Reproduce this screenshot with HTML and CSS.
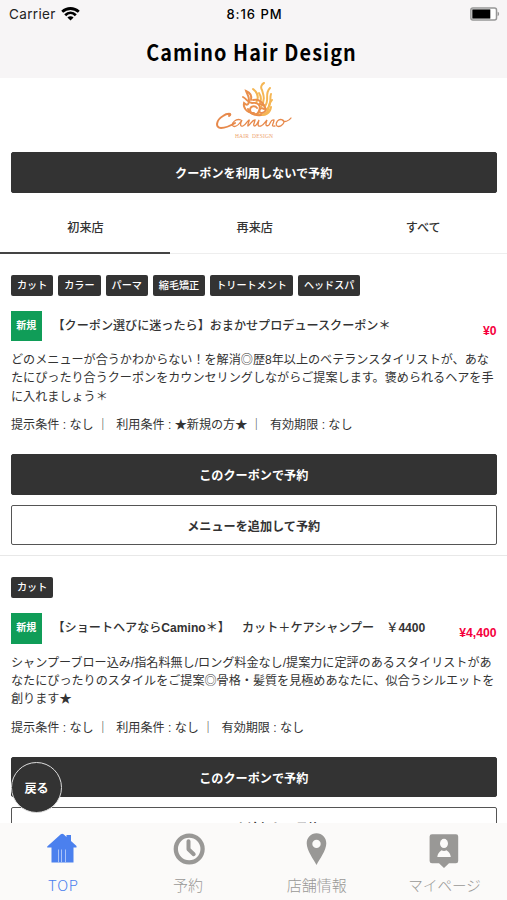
FILE: index.html
```html
<!DOCTYPE html>
<html lang="ja">
<head>
<meta charset="UTF-8">
<meta name="viewport" content="width=device-width, initial-scale=1.0">
<title>Camino Hair Design</title>
<link rel="stylesheet" href="styles.css">
</head>
<body>
<div class="app">
    <header class="header">
        <div class="status-bar">
            <div class="carrier">
                <span>Carrier</span>
                <svg width="19" height="14" viewBox="0 0 19 14" fill="none" stroke="#000" stroke-width="2.8">
                    <path d="M1.2 4.8C6 0.4 13 0.4 17.8 4.8"/>
                    <path d="M4.2 8.2C7.3 5.2 11.7 5.2 14.8 8.2"/>
                    <path d="M9.5 13.6L6.4 10.5C8.2 8.9 10.8 8.9 12.6 10.5Z" fill="#000" stroke="none"/>
                </svg>
            </div>
            <span class="time">8:16 PM</span>
            <svg class="battery" width="30" height="14" viewBox="0 0 30 14">
                <rect x="0.9" y="0.9" width="25.6" height="12.2" rx="2" fill="#fff" stroke="#969696" stroke-width="1.5"/>
                <rect x="2.3" y="2.4" width="18" height="9.2" fill="#000"/>
                <path d="M27.6 4.8C29.6 5.4 29.6 8.6 27.6 9.2Z" fill="#969696"/>
            </svg>
        </div>
        <h1 class="title">Camino Hair Design</h1>
    </header>

    <main class="content">
        <div class="logo">
            <svg width="76" height="58" viewBox="0 0 76 58" fill="none" stroke-linecap="round">
                <g stroke="#f5b654" stroke-width="2">
                    <path d="M45 25C50 17 47 12 46 8C44 5 46 2 48 1"/>
                    <path d="M40 21C43 16 42 11 37 7"/>
                    <path d="M49 24C54 18 48 12 54 6"/>
                    <path d="M50 28C57 22 53 17 55 12"/>
                    <path d="M46 33C56 30 50 23 56 18"/>
                    <path d="M42 32C49 35 54 31 55 25"/>
                    <path d="M43 23C46 18 45 14 43 11"/>
                </g>
                <g stroke="#ea8f4c" stroke-width="1.9">
                    <path d="M38 31C30 31 27 25 28 21C31 24 33 23 33 18C33 14 31 12 30 9C35 11 36 14 35 18"/>
                    <path d="M27 15C31 17 31 20 36 21C43 20 45 24 43 29C41 34 35 33 34 28C34 24 39 23 41 26"/>
                    <path d="M44 22C50 23 52 30 46 31C41 31 44 24 48 27"/>
                    <path d="M32 27C33 31 39 34 45 33"/>
                    <path d="M37 18C42 17 46 20 48 23"/>
                </g>
                <g stroke="#e7894b" stroke-width="1.3">
                    <path d="M13 34C17 31 11 31 7 34C0 38-1 46 5 46C10 46 14 44 19 41" stroke-width="2"/>
                    <path d="M25 38C20 36 15 41 17 44C20 46 24 41 26 38C24 42 24 45 27 44C30 43 31 39 33 38C34 38 31 43 32 44C35 42 36 38 39 38C39 40 36 44 39 44C41 43 42 40 43 38C42 42 41 45 45 44C48 43 49 40 51 38C49 43 50 45 53 43C55 40 55 37 58 38C58 41 54 45 59 44"/>
                    <path d="M67 38C62 36 59 41 61 44C65 46 71 39 66 38C68 41 73 39 75 36"/>
                </g>
                <text x="38" y="56" class="logo-text" textLength="38">HAIR&nbsp; DESIGN</text>
            </svg>
        </div>

        <div class="no-coupon">
            <button class="btn btn-dark">クーポンを利用しないで予約</button>
        </div>

        <div class="tabs">
            <div class="tab active">初来店</div>
            <div class="tab">再来店</div>
            <div class="tab">すべて</div>
        </div>

        <section class="coupon">
            <div class="tags">
                <span class="tag">カット</span>
                <span class="tag">カラー</span>
                <span class="tag">パーマ</span>
                <span class="tag">縮毛矯正</span>
                <span class="tag">トリートメント</span>
                <span class="tag">ヘッドスパ</span>
            </div>
            <div class="coupon-head">
                <span class="badge">新規</span>
                <h2 class="coupon-name">【クーポン選びに迷ったら】おまかせプロデュースクーポン＊</h2>
                <span class="price">¥0</span>
            </div>
            <p class="description">どのメニューが合うかわからない！を解消◎歴8年以上のベテランスタイリストが、あな<br>たにぴったり合うクーポンをカウンセリングしながらご提案します。褒められるヘアを手<br>に入れましょう＊</p>
            <div class="conditions">
                <span>提示条件 : なし</span><i>｜</i><span>利用条件 : ★新規の方★</span><i>｜</i><span>有効期限 : なし</span>
            </div>
            <button class="btn btn-dark">このクーポンで予約</button>
            <button class="btn btn-light">メニューを追加して予約</button>
        </section>

        <section class="coupon">
            <div class="tags">
                <span class="tag">カット</span>
            </div>
            <div class="coupon-head">
                <span class="badge">新規</span>
                <h2 class="coupon-name">【ショートヘアなら<b>Camino</b>＊】　カット＋ケアシャンプー　￥<b>4400</b></h2>
                <span class="price">¥4,400</span>
            </div>
            <p class="description">シャンプーブロー込み/指名料無し/ロング料金なし/提案力に定評のあるスタイリストがあ<br>なたにぴったりのスタイルをご提案◎骨格・髪質を見極めあなたに、似合うシルエットを<br>創ります★</p>
            <div class="conditions">
                <span>提示条件 : なし</span><i>｜</i><span>利用条件 : なし</span><i>｜</i><span>有効期限 : なし</span>
            </div>
            <button class="btn btn-dark">このクーポンで予約</button>
            <button class="btn btn-light">メニューを追加して予約</button>
        </section>
    </main>

    <button class="back">戻る</button>

    <nav class="nav">
        <a class="nav-item current">
            <svg width="34" height="34" viewBox="0 0 34 34" fill="currentColor">
                <path d="M1.2 15.6L14.8 3.2Q16.2 2.2 17.6 3.2L20.5 6V4H25V10L30.5 15V16.5H27.5V31.5H5.5V16.5H1.2Z"/>
                <path d="M12.5 18.5V31.5M15.5 18.5V31.5M19.5 18.5V31.5" stroke="#a9c2f8" stroke-width="1"/>
            </svg>
            <span>TOP</span>
        </a>
        <a class="nav-item">
            <svg width="34" height="34" viewBox="0 0 34 34" fill="none" stroke="currentColor">
                <circle cx="16.2" cy="18" r="13.4" stroke-width="4.3"/>
                <path d="M15.5 10.2V18.3L20.7 23.2" stroke-width="4" stroke-linecap="round" stroke-linejoin="round"/>
            </svg>
            <span class="label-reserve">予約</span>
        </a>
        <a class="nav-item">
            <svg width="34" height="34" viewBox="0 0 34 34" fill="currentColor">
                <path fill-rule="evenodd" d="M16.5 2.2C10.8 2.2 6.7 6.7 6.7 12.2C6.7 19.5 13.7 28.5 16.5 34C19.3 28.5 26.3 19.5 26.3 12.2C26.3 6.7 22.2 2.2 16.5 2.2ZM16.5 8.7A4.2 4.2 0 1 1 16.5 17.1A4.2 4.2 0 1 1 16.5 8.7Z"/>
            </svg>
            <span>店舗情報</span>
        </a>
        <a class="nav-item">
            <svg width="34" height="37" viewBox="0 0 34 37" fill="currentColor">
                <path d="M5 3.2H29Q31.2 3.2 31.2 5.4V30Q31.2 32.2 29 32.2H22L17 37L12 32.2H5Q2.6 32.2 2.6 30V5.4Q2.6 3.2 5 3.2Z"/>
                <ellipse cx="17" cy="12.4" rx="4" ry="4.6" fill="#fbfaf9"/>
                <path d="M10.3 26C11 21.8 13.2 20.5 14.5 19.3C16 20.2 18 20.2 19.5 19.3C21 20.5 23.2 21.8 23.8 26Z" fill="#fbfaf9"/>
            </svg>
            <span>マイページ</span>
        </a>
    </nav>
</div>
</body>
</html>
```

FILE: styles.css
```css
* {
    box-sizing: border-box;
}
body {
    margin: 0;
    background-color: #fff;
    color: #333;
    font-family: "Liberation Sans", "Noto Sans CJK JP", sans-serif;
    font-size: 12.1px;
    text-spacing-trim: space-all;
}
.app {
    position: relative;
    display: flex;
    flex-direction: column;
    height: 900px;
    overflow: hidden;
}

/* header */
.header {
    flex: none;
    height: 78px;
    background-color: #f7f5f6;
    color: #000;
}
.status-bar {
    display: grid;
    grid-template-columns: 1fr auto 1fr;
    align-items: center;
    height: 27px;
    padding: 0 7px 0 9px;
    font-family: Inter, sans-serif;
    font-size: 13px;
}
.carrier {
    display: flex;
    align-items: center;
    gap: 5px;
    font-size: 13.5px;
    letter-spacing: 0.35px;
    color: #222;
}
.time {
    font-weight: 500;
    letter-spacing: 0.95px;
}
.battery {
    justify-self: end;
}
.title {
    margin: 0;
    font-family: "Noto Sans CJK JP", sans-serif;
    font-size: 22px;
    font-weight: 700;
    line-height: 48px;
    letter-spacing: 1.2px;
    text-align: center;
    transform: translateX(-2px) scaleX(0.9);
}

/* content */
.content {
    flex: 1;
    min-height: 0;
    overflow: hidden;
}
.logo {
    display: flex;
    justify-content: center;
    height: 74px;
    padding-top: 4px;
}
.logo-text {
    fill: #eda36e;
    font-family: "Liberation Serif", serif;
    font-size: 5.5px;
    text-anchor: middle;
}
.no-coupon {
    padding: 0 10.5px 0 11px;
}
.btn {
    display: block;
    width: 100%;
    height: 40.5px;
    padding: 0;
    border: 1px solid #333;
    border-radius: 2px;
    font-family: inherit;
    font-size: 12.13px;
    font-weight: 700;
}
.btn-dark {
    background-color: #333;
    color: #fff;
}
.btn-light {
    margin-top: 10px;
    border-color: #555;
    background-color: #fff;
    color: #333;
}
.tabs {
    display: flex;
    height: 61px;
    border-bottom: 1px solid #eee;
}
.tab {
    flex: 1;
    height: 61px;
    padding-left: 1px;
    line-height: 70px;
    font-weight: 500;
    text-align: center;
}
.tab.active {
    flex: 0 0 170px;
    border-bottom: 2px solid #444;
}
.coupon {
    height: 302.5px;
    padding: 21.4px 10.5px 0 11px;
    border-bottom: 1px solid #e8e8e8;
}
.tags {
    display: flex;
    gap: 5px;
}
.tag {
    height: 21px;
    padding: 0 6px;
    border-radius: 2px;
    background-color: #333;
    color: #fff;
    font-size: 10.1px;
    font-weight: 500;
    line-height: 21px;
}
.coupon-head {
    display: flex;
    align-items: center;
    height: 30px;
    margin-top: 15px;
}
.badge {
    flex: none;
    width: 30.5px;
    height: 30.5px;
    background-color: #109d58;
    color: #fff;
    font-size: 10px;
    font-weight: 700;
    line-height: 30px;
    text-align: center;
}
.coupon-name {
    flex: 1;
    margin: 0 0 0 11px;
    font-size: 12.1px;
    font-weight: 500;
    line-height: 30px;
    white-space: nowrap;
}
.price {
    align-self: flex-end;
    color: #f5003d;
    font-size: 12.2px;
    font-weight: 700;
    line-height: 20px;
}
.description {
    margin: 10.3px 0 0;
    line-height: 18.3px;
    white-space: nowrap;
}
.conditions {
    height: 18px;
    margin: 10.3px 0 20px;
    line-height: 18px;
    white-space: nowrap;
}
.conditions i {
    margin: 0 7.5px 0 3px;
    font-style: normal;
}

/* floating back button */
.back {
    position: absolute;
    left: 11px;
    top: 762px;
    width: 51px;
    height: 51px;
    padding: 0;
    border: 1px solid #ddd;
    border-radius: 50%;
    background-color: #333;
    color: #fff;
    font-family: inherit;
    font-size: 12.1px;
    font-weight: 700;
}

/* bottom navigation */
.nav {
    display: flex;
    flex: none;
    height: 77px;
    background-color: #fbfaf9;
}
.nav-item {
    display: flex;
    flex: 1;
    flex-direction: column;
    align-items: center;
    justify-content: space-between;
    padding: 8px 0 6px;
    color: #999896;
    font-family: "Noto Sans CJK JP", sans-serif;
    font-size: 15px;
    font-weight: 300;
    line-height: 18px;
}
.nav-item.current {
    color: #4b80ee;
}
.nav-item.current span {
    letter-spacing: 0.7px;
}
.label-reserve {
    padding-right: 4px;
}
.nav-item:last-child span {
    padding-left: 2px;
    font-size: 14.6px;
}
```
